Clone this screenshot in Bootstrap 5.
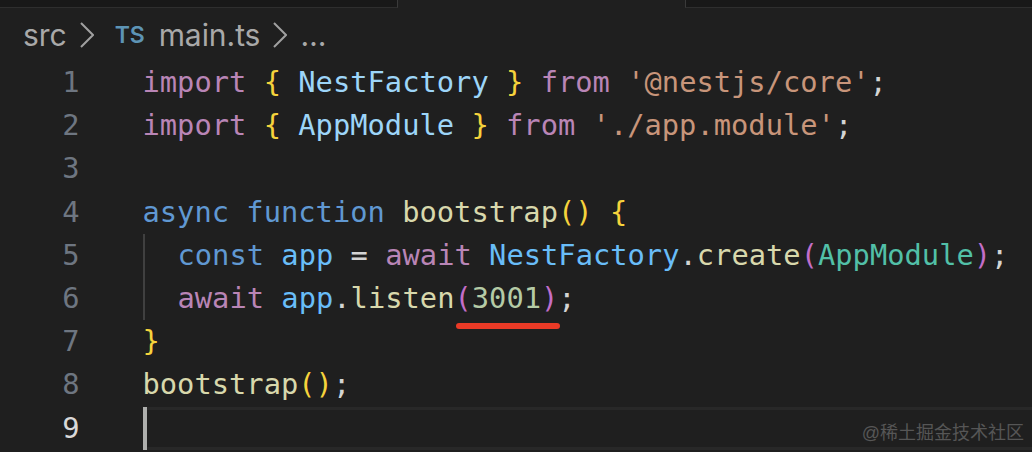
<!DOCTYPE html>
<html lang="en">
<head>
<meta charset="utf-8">
<title>main.ts</title>
<link href="https://cdn.jsdelivr.net/npm/bootstrap@5.3.0/dist/css/bootstrap.min.css" rel="stylesheet">
<style>
html,body{margin:0;height:452px;overflow:hidden;background:#1f1f1f}
.stage{position:relative;width:1032px;height:452px;background:#1f1f1f;overflow:hidden}
.tabstrip{height:8px}
.tabdark{background:#181818;border-bottom:1px solid #2e2e2e}
.tabdark.lefttab{width:398px;border-right:1px solid #3a3a3a}
.tabdark.righttab{border-left:1px solid #3a3a3a}
.tabactive{width:287px}
.crumbs{height:53px;padding-left:23px;padding-top:1px;color:#a9a9a9;font-family:"Inter","Liberation Sans",sans-serif;font-size:30px;letter-spacing:-.05px}
.tsicon{color:#5d94b5;font-size:23px;font-weight:600;width:44px;letter-spacing:0;margin-left:21px}
.chev{margin-left:13px}
.dots{margin-left:13px}
.code{font-family:"DejaVu Sans Mono",monospace;font-size:28.75px;line-height:43.2px;color:#d4d4d4}
.ln{width:142.5px;height:43.2px;padding-right:63px;text-align:right;color:#6e7681}
.ln.on{color:#d8d8d8}
.cl{height:43.2px}
.cl>div{white-space:pre}
.curline{border-top:3px solid #282828;border-bottom:3px solid #282828;height:43.2px;line-height:37.2px;flex:1}
.guide{display:inline-block;width:35px;height:43.2px;border-left:2px solid #404040;vertical-align:top}
.cursor{display:inline-block;width:4px;height:43px;background:#aeafad;margin-top:-3px;vertical-align:top}
.k{color:#b985b6}.s{color:#6098d2}.v{color:#9dd5f8}.c{color:#69bdf8}.y{color:#f6d33c}.t{color:#c8957a}.f{color:#d8d8ac}.g{color:#52c0a8}.n{color:#b5cba6}.p{color:#c36ec8}
.redline{position:absolute;left:456px;top:323px;width:104px;height:6px;border-radius:3px;background:#ea3a26}
.mark-w{position:absolute;right:8px;top:421px;color:#565656;font-size:18px;line-height:24px;font-family:"Liberation Sans","Noto Sans CJK SC",sans-serif}
</style>
</head>
<body>
<div class="stage">
  <div class="tabstrip d-flex">
    <div class="tabdark lefttab"></div>
    <div class="tabactive"></div>
    <div class="tabdark righttab flex-grow-1"></div>
  </div>
  <div class="crumbs d-flex align-items-center">
    <span>src</span>
    <svg class="chev" width="14" height="28" viewBox="0 0 14 28" fill="none" stroke="#a0a0a0" stroke-width="2"><path d="M1 2l12 12L1 26"/></svg>
    <span class="tsicon">TS</span>
    <span>main.ts</span>
    <svg class="chev" width="14" height="28" viewBox="0 0 14 28" fill="none" stroke="#a0a0a0" stroke-width="2"><path d="M1 2l12 12L1 26"/></svg>
    <span class="dots">…</span>
  </div>
  <div class="code">
    <div class="cl d-flex"><div class="ln">1</div><div><span class="k">import</span> <span class="y">{</span> <span class="v">NestFactory</span> <span class="y">}</span> <span class="k">from</span> <span class="t">'@nestjs/core'</span>;</div></div>
    <div class="cl d-flex"><div class="ln">2</div><div><span class="k">import</span> <span class="y">{</span> <span class="v">AppModule</span> <span class="y">}</span> <span class="k">from</span> <span class="t">'./app.module'</span>;</div></div>
    <div class="cl d-flex"><div class="ln">3</div><div></div></div>
    <div class="cl d-flex"><div class="ln">4</div><div><span class="s">async</span> <span class="s">function</span> <span class="f">bootstrap</span><span class="y">()</span> <span class="y">{</span></div></div>
    <div class="cl d-flex"><div class="ln">5</div><div><span class="guide"></span><span class="s">const</span> <span class="c">app</span> = <span class="k">await</span> <span class="c">NestFactory</span>.<span class="f">create</span><span class="p">(</span><span class="g">AppModule</span><span class="p">)</span>;</div></div>
    <div class="cl d-flex"><div class="ln">6</div><div><span class="guide"></span><span class="k">await</span> <span class="c">app</span>.<span class="f">listen</span><span class="p">(</span><span class="n">3001</span><span class="p">)</span>;</div></div>
    <div class="cl d-flex"><div class="ln">7</div><div><span class="y">}</span></div></div>
    <div class="cl d-flex"><div class="ln">8</div><div><span class="f">bootstrap</span><span class="y">()</span>;</div></div>
    <div class="cl d-flex"><div class="ln on">9</div><div class="curline"><span class="cursor"></span></div></div>
  </div>
  <div class="redline"></div>
  <div class="mark-w">@稀土掘金技术社区</div>
</div>
</body>
</html>
